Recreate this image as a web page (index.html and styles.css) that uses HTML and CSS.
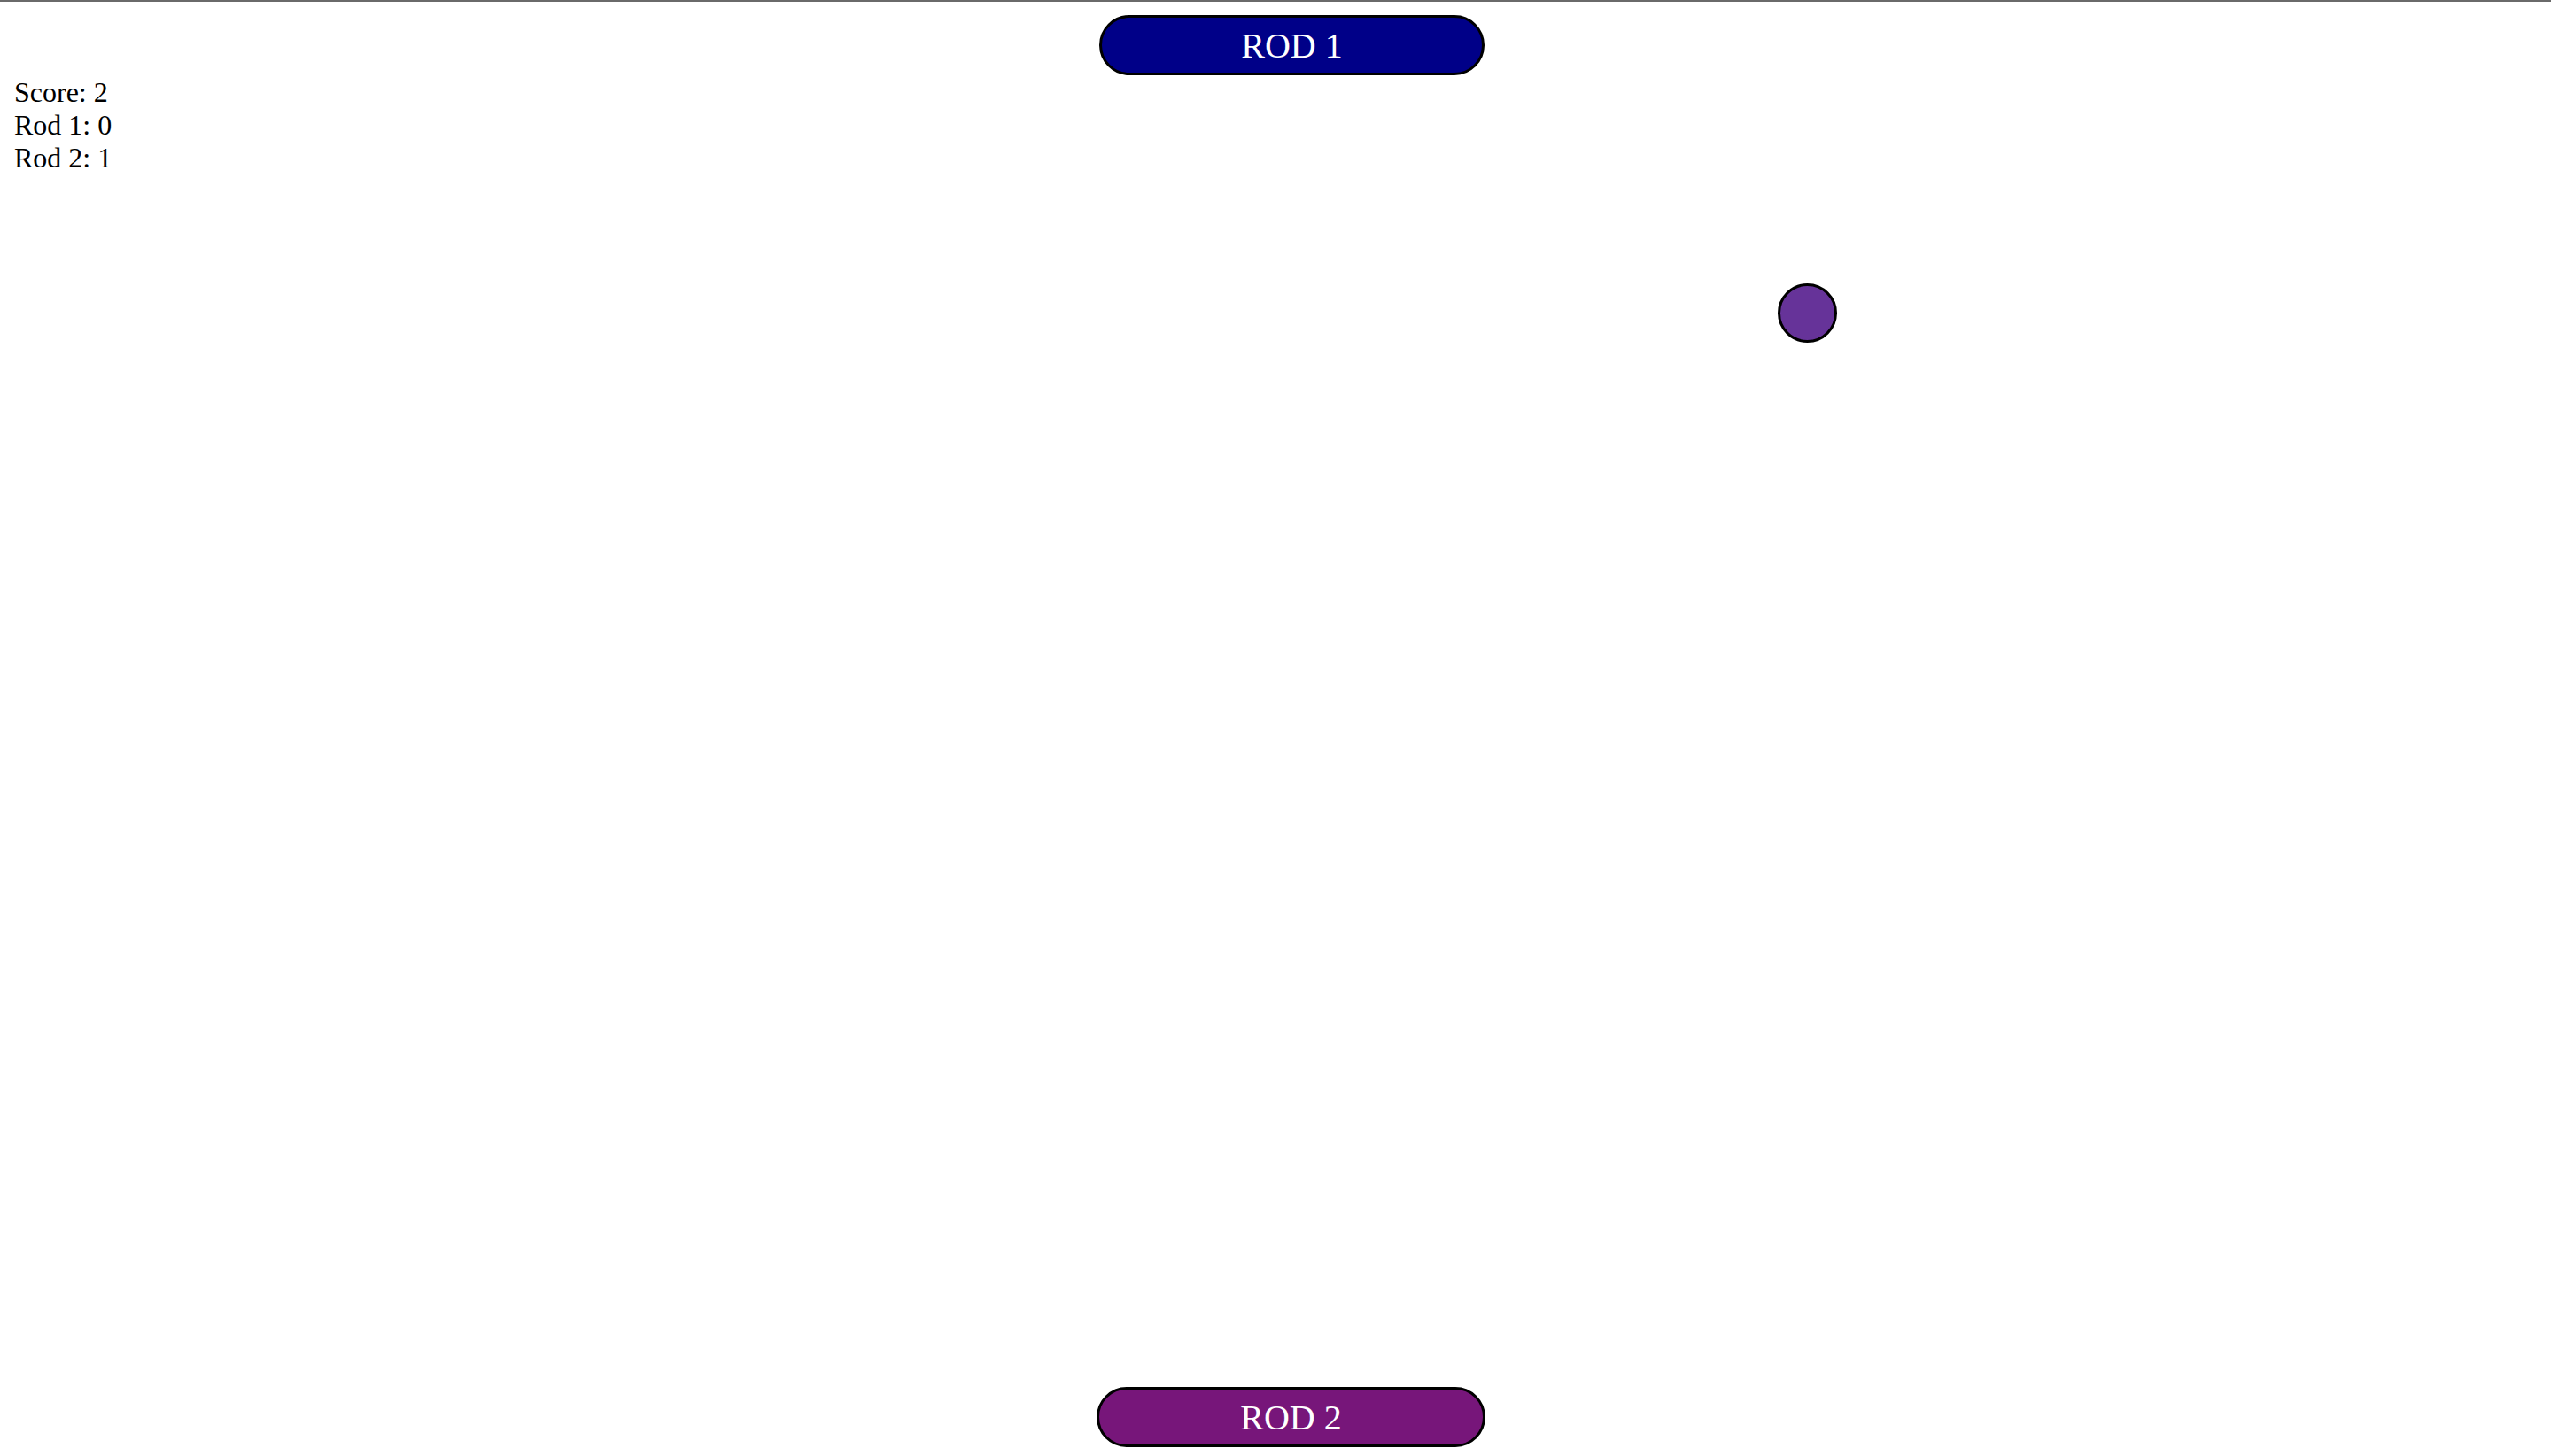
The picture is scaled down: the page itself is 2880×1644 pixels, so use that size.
FILE: index.html
```html
<!DOCTYPE html>
<html lang="en">
<head>
<meta charset="utf-8">
<title>Rod Game</title>
<link rel="stylesheet" href="styles.css">
</head>
<body>
<div class="field">
  <div class="rod rod-top">ROD 1</div>
  <div class="scoreboard">
    <div class="line">Score: 2</div>
    <div class="line">Rod 1: 0</div>
    <div class="line">Rod 2: 1</div>
  </div>
  <div class="ball"></div>
  <div class="rod rod-bottom">ROD 2</div>
</div>
</body>
</html>
```
FILE: styles.css
```css
html, body {
  margin: 0;
  padding: 0;
  background: #ffffff;
}
body {
  font-family: "Liberation Serif", "Times New Roman", serif;
  color: #000;
}
.field {
  position: relative;
  height: 1642px;
  border-top: 2px solid #6a6a6a;
  overflow: hidden;
}
.scoreboard {
  padding-top: 84px;
  padding-left: 16px;
  font-size: 32px;
  line-height: 36.8px;
}
.rod {
  position: absolute;
  box-sizing: border-box;
  border: 3px solid #000;
  border-radius: 34px;
  color: #fff;
  font-size: 40px;
  display: flex;
  align-items: center;
  justify-content: center;
}
.rod-top {
  left: 1241px;
  top: 15px;
  width: 435px;
  height: 68px;
  background: #000088;
}
.rod-bottom {
  left: 1238px;
  top: 1564px;
  width: 439px;
  height: 68px;
  background: #77167a;
}
.ball {
  position: absolute;
  box-sizing: border-box;
  left: 2007px;
  top: 318px;
  width: 67px;
  height: 67px;
  border-radius: 50%;
  border: 3px solid #000;
  background: #663399;
}
```
